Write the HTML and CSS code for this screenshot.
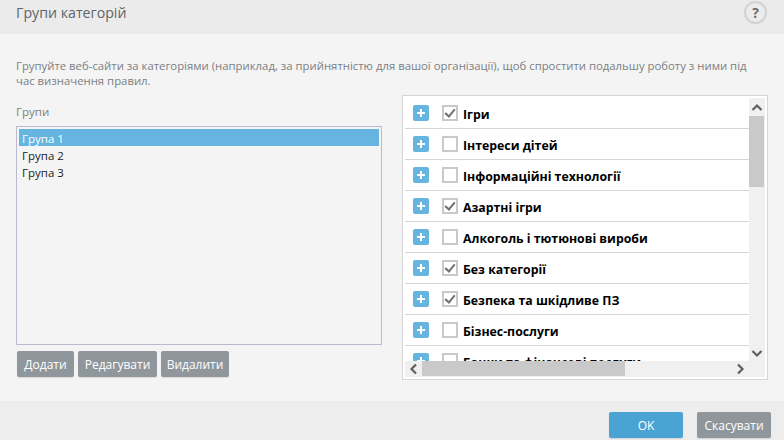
FILE: index.html
```html
<!DOCTYPE html>
<html lang="uk">
<head>
    <meta charset="UTF-8">
    <title>Групи категорій</title>
    <link rel="stylesheet" href="styles.css">
</head>
<body>
    <div class="dialog">
        <header class="title-bar">
            <h1>Групи категорій</h1>
            <span class="help">?</span>
        </header>

        <main class="content">
            <p class="intro">Групуйте веб-сайти за категоріями (наприклад, за прийнятністю для вашої організації), щоб спростити подальшу роботу з ними під час визначення правил.</p>

            <div class="columns">
                <section class="groups">
                    <div class="groups-label">Групи</div>
                    <ul class="group-list">
                        <li class="selected">Група 1</li>
                        <li>Група 2</li>
                        <li>Група 3</li>
                    </ul>
                    <div class="group-buttons">
                        <button class="btn">Додати</button>
                        <button class="btn">Редагувати</button>
                        <button class="btn">Видалити</button>
                    </div>
                </section>

                <section class="categories">
                    <ul class="category-list">
                        <li><span class="plus"></span><span class="check checked"></span>Ігри</li>
                        <li><span class="plus"></span><span class="check"></span>Інтереси дітей</li>
                        <li><span class="plus"></span><span class="check"></span>Інформаційні технології</li>
                        <li><span class="plus"></span><span class="check checked"></span>Азартні ігри</li>
                        <li><span class="plus"></span><span class="check"></span>Алкоголь і тютюнові вироби</li>
                        <li><span class="plus"></span><span class="check checked"></span>Без категорії</li>
                        <li><span class="plus"></span><span class="check checked"></span>Безпека та шкідливе ПЗ</li>
                        <li><span class="plus"></span><span class="check"></span>Бізнес-послуги</li>
                        <li><span class="plus"></span><span class="check"></span>Банки та фінансові послуги</li>
                    </ul>
                    <div class="scroll-v">
                        <svg class="arrow" width="16" height="18" viewBox="0 0 16 18"><path d="M3.5 12 8 7.5 12.500 12" /></svg>
                        <div class="thumb-v"></div>
                        <svg class="arrow arrow-end" width="16" height="14" viewBox="0 0 16 14"><path d="M3.5 4 8 8.500 12.500 4" /></svg>
                    </div>
                    <div class="scroll-h">
                        <svg class="arrow" width="17" height="16" viewBox="0 0 17 16"><path d="M11 3.500 6.500 8 11 12.500" /></svg>
                        <div class="thumb-h"></div>
                        <svg class="arrow arrow-end" width="17" height="16" viewBox="0 0 17 16"><path d="M6 3.500 10.500 8 6 12.500" /></svg>
                    </div>
                    <div class="scroll-corner"></div>
                </section>
            </div>
        </main>

        <footer class="footer">
            <button class="btn btn-ok">OK</button>
            <button class="btn btn-cancel">Скасувати</button>
        </footer>
    </div>
</body>
</html>
```

FILE: styles.css
```css
html, body {
    margin: 0;
    padding: 0;
}
body {
    font-family: "Open Sans", "Noto Sans", sans-serif;
    font-size: 11.5px;
    color: #000;
    background-color: #f4f4f4;
}
ul {
    list-style: none;
    margin: 0;
    padding: 0;
}
.dialog {
    width: 784px;
    height: 440px;
    display: flex;
    flex-direction: column;
    overflow: hidden;
}

/* title bar */
.title-bar {
    height: 34px;
    flex: none;
    display: flex;
    align-items: center;
    justify-content: space-between;
    padding: 0 17px 7px 16px;
    box-sizing: border-box;
    background-color: #ebebeb;
}
.title-bar h1 {
    margin: -2px 0 0;
    font-size: 14.2px;
    font-weight: 400;
    color: #5f6468;
}
.help {
    width: 23px;
    height: 23px;
    margin-top: -2px;
    box-sizing: border-box;
    border: 2px solid #d2d2d2;
    border-radius: 50%;
    display: flex;
    align-items: center;
    justify-content: center;
    font-size: 14px;
    font-weight: 700;
    color: #6c6c6c;
}

/* main area */
.content {
    flex: 1;
    padding: 24px 16px 0;
    background-color: #f4f4f4;
}
.intro {
    margin: 0;
    width: 736px;
    font-size: 11.35px;
    line-height: 15px;
    color: #7b7f83;
}
.columns {
    display: flex;
    justify-content: space-between;
    margin-top: 7px;
}
.groups {
    width: 366px;
    padding-top: 9px;
}
.groups-label {
    height: 16px;
    line-height: 16px;
    color: #7b7f83;
}
.group-list {
    height: 219px;
    margin-top: 6px;
    padding: 2px;
    box-sizing: border-box;
    border: 1px solid #bdb9cd;
}
.group-list li {
    height: 17px;
    line-height: 19px;
    padding-left: 3px;
    color: #1c1c1c;
}
.group-list li.selected {
    background-color: #65b5e0;
    color: #fff;
}
.group-buttons {
    display: grid;
    grid-template-columns: 57px 79px 68px;
    gap: 4px;
    margin: 6px 0 0 1px;
}

/* buttons */
.btn {
    height: 26px;
    padding: 0;
    border: none;
    border-radius: 2px;
    font-family: inherit;
    font-size: 12px;
    color: #fff;
    background-color: #8f979d;
    box-shadow: 0 1px 1px rgba(0, 0, 0, 0.1);
}

/* category panel */
.categories {
    width: 366px;
    height: 285px;
    padding: 2px;
    box-sizing: border-box;
    border: 1px solid #d5d5d5;
    background-color: #fff;
    display: grid;
    grid-template-columns: 1fr 16px;
    grid-template-rows: 1fr 16px;
}
.category-list {
    overflow: hidden;
    min-height: 0;
}
.category-list li {
    height: 31px;
    box-sizing: border-box;
    display: flex;
    align-items: center;
    padding: 3px 0 0 8px;
    border-bottom: 1px solid #d5d5d5;
    font-size: 12.3px;
    font-weight: 700;
    color: #000;
}
.plus {
    width: 16px;
    height: 16px;
    margin: -3px 13px 0 0;
    flex: none;
    border-radius: 2px;
    background-color: #65b5e0;
    background-image: linear-gradient(#fff, #fff), linear-gradient(#fff, #fff);
    background-size: 8px 2px, 2px 8px;
    background-position: center;
    background-repeat: no-repeat;
}
.check {
    width: 16px;
    height: 16px;
    margin: -3px 5px 0 0;
    flex: none;
    box-sizing: border-box;
    border: 2px solid #c9c9c9;
    background-color: #fff;
    position: relative;
}
.check.checked::after {
    content: "";
    position: absolute;
    left: 3px;
    top: 0;
    width: 4px;
    height: 8px;
    border: solid #707070;
    border-width: 0 2px 2px 0;
    transform: rotate(40deg);
}

/* fake scrollbars */
.scroll-v {
    background-color: #f0f0f0;
    display: flex;
    flex-direction: column;
    min-height: 0;
}
.thumb-v {
    width: 15px;
    height: 71px;
    background-color: #c9c9c9;
}
.scroll-h {
    background-color: #f0f0f0;
    display: flex;
    align-items: flex-start;
}
.thumb-h {
    width: 203px;
    height: 15px;
    background-color: #c9c9c9;
}
.scroll-corner {
    background-color: #f0f0f0;
}
.arrow {
    flex: none;
    display: block;
}
.arrow path {
    fill: none;
    stroke: #606060;
    stroke-width: 2.2;
}
.arrow-end {
    margin-top: auto;
    margin-left: auto;
}

/* footer */
.footer {
    height: 39px;
    flex: none;
    display: flex;
    justify-content: flex-end;
    align-items: flex-start;
    gap: 14px;
    padding: 11px 13px 0 0;
    box-sizing: border-box;
    background-color: #ededed;
}
.btn-ok {
    width: 74px;
    background-color: #4aa3d3;
}
.btn-cancel {
    width: 74px;
}
```
